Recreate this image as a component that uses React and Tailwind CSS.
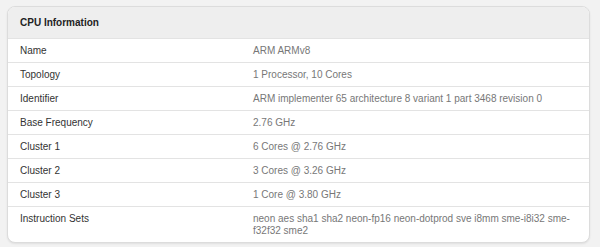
const rows = [
  ['Name', 'ARM ARMv8'],
  ['Topology', '1 Processor, 10 Cores'],
  ['Identifier', 'ARM implementer 65 architecture 8 variant 1 part 3468 revision 0'],
  ['Base Frequency', '2.76 GHz'],
  ['Cluster 1', '6 Cores @ 2.76 GHz'],
  ['Cluster 2', '3 Cores @ 3.26 GHz'],
  ['Cluster 3', '1 Core @ 3.80 GHz'],
  ['Instruction Sets', 'neon aes sha1 sha2 neon-fp16 neon-dotprod sve i8mm sme-i8i32 sme-f32f32 sme2'],
];

export default function App() {
  return (
    <div
      className="w-[600px] h-[247px] bg-[#f2f2f2] pt-[6px] pl-[7px]"
      style={{ fontFamily: '"Liberation Sans", Arial, sans-serif' }}
    >
      <div className="w-[583px] rounded-lg border border-[#dcdcdc] bg-white overflow-hidden shadow-[0_1px_2px_rgba(0,0,0,0.08)]">
        <div className="h-[31px] bg-[#eeeeee] px-3 flex items-center text-[10px] font-bold text-[#222]">
          CPU Information
        </div>
        {rows.map(([label, value]) => (
          <div key={label} className="flex border-t border-[#e3e3e3] text-[10px] leading-[12px] pt-[6px] pb-[5px] min-h-[24px]">
            <div className="w-[245px] shrink-0 pl-3 text-[#333]">{label}</div>
            <div className="flex-1 pr-3 text-[#777]">{value}</div>
          </div>
        ))}
      </div>
    </div>
  );
}
